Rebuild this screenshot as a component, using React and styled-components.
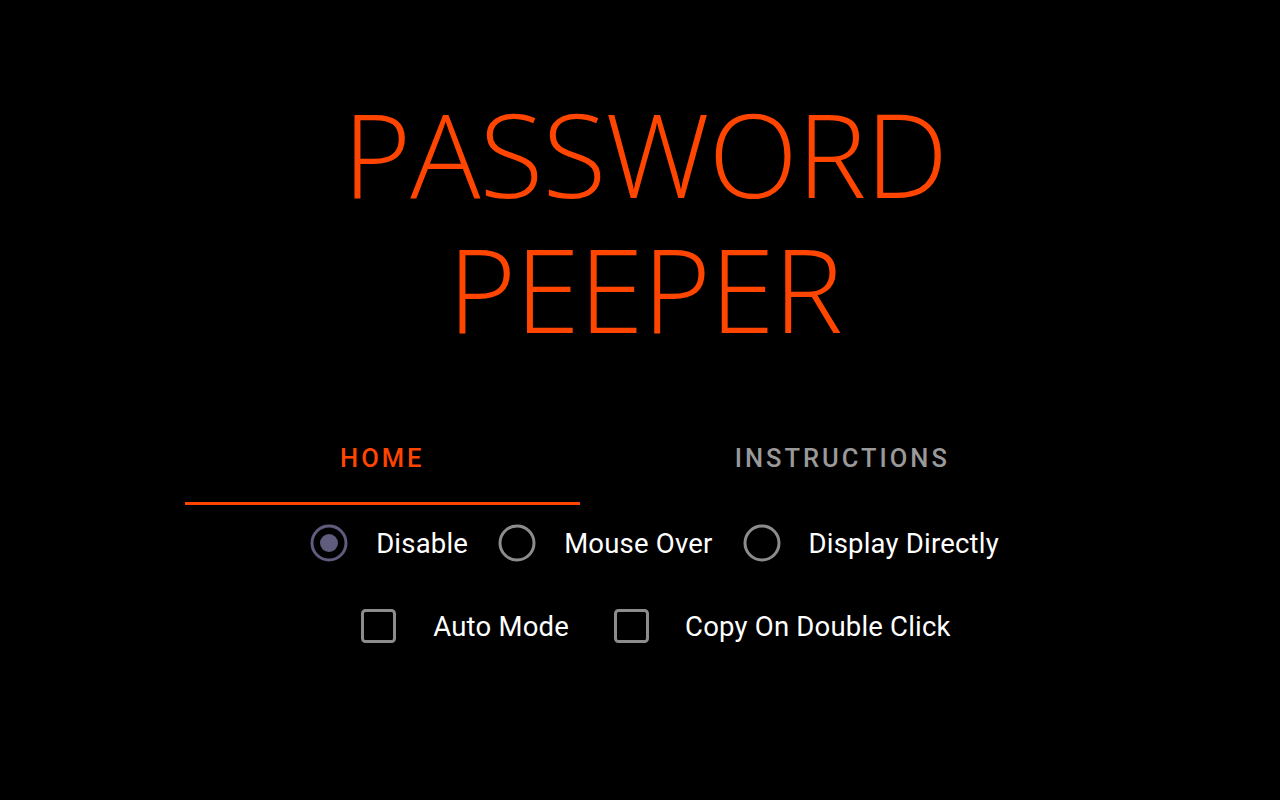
import React, { useState } from 'react';
import styled, { createGlobalStyle } from 'styled-components';

const GlobalStyle = createGlobalStyle`
  html, body {
    margin: 0;
    padding: 0;
    background: #000;
  }
  body {
    font-family: Roboto, "Liberation Sans", sans-serif;
    color: #fff;
  }
`;

const Page = styled.div`
  min-height: 800px;
  padding-left: 10px;
  display: flex;
  flex-direction: column;
  align-items: center;
`;

const Title = styled.h1`
  margin: 85px 0 0;
  font-family: "Open Sans", "Liberation Sans", sans-serif;
  font-weight: 300;
  font-size: 117px;
  line-height: 135px;
  letter-spacing: -1px;
  color: #ff4500;
  text-align: center;
`;

const TitleLine = styled.span`
  display: block;
`;

const TabBar = styled.div`
  margin-top: 76px;
  width: 920px;
  display: flex;
`;

const Tab = styled.button`
  flex: 1 1 auto;
  height: 74px;
  padding: 0 16px 18px;
  border: none;
  background: none;
  border-bottom: 3px solid ${(p) => (p.active ? '#ff4500' : 'transparent')};
  box-sizing: border-box;
  display: flex;
  align-items: center;
  justify-content: center;
  font-family: Roboto, "Liberation Sans", sans-serif;
  font-weight: 500;
  font-size: 25.5px;
  letter-spacing: 3px;
  text-transform: uppercase;
  color: ${(p) => (p.active ? '#ff4500' : '#999')};
  cursor: pointer;
`;

const OptionRow = styled.div`
  display: flex;
  align-items: center;
  gap: ${(p) => p.gap}px;
  height: 56px;
  margin-top: ${(p) => p.top}px;
  padding-left: ${(p) => p.shift}px;
`;

const Option = styled.label`
  display: flex;
  align-items: center;
  gap: ${(p) => p.gap}px;
  font-size: 27.5px;
  letter-spacing: 0.2px;
  color: #fff;
  cursor: pointer;
`;

const RadioIcon = ({ checked }) => (
  <svg width="38" height="38" viewBox="0 0 38 38">
    <circle
      cx="19"
      cy="19"
      r="17"
      fill="none"
      stroke={checked ? '#5f5c7e' : '#8c8c8c'}
      strokeWidth="3"
    />
    {checked && <circle cx="19" cy="19" r="9" fill="#5f5c7e" />}
  </svg>
);

const BoxIcon = () => (
  <svg width="35" height="34" viewBox="0 0 35 34">
    <rect x="1.5" y="1.5" width="32" height="31" rx="3" fill="none" stroke="#8c8c8c" strokeWidth="3" />
  </svg>
);

export default function App() {
  const [tab, setTab] = useState(0);
  const [mode, setMode] = useState('disable');

  const modes = [
    { id: 'disable', label: 'Disable' },
    { id: 'mouse', label: 'Mouse Over' },
    { id: 'direct', label: 'Display Directly' },
  ];

  return (
    <Page>
      <GlobalStyle />
      <Title>
        <TitleLine>PASSWORD</TitleLine>
        <TitleLine>PEEPER</TitleLine>
      </Title>
      <TabBar>
        <Tab active={tab === 0} onClick={() => setTab(0)}>Home</Tab>
        <Tab active={tab === 1} onClick={() => setTab(1)}>Instructions</Tab>
      </TabBar>
      <OptionRow gap={30} top={10} shift={19}>
        {modes.map((m) => (
          <Option key={m.id} gap={28} onClick={() => setMode(m.id)}>
            <RadioIcon checked={mode === m.id} />
            {m.label}
          </Option>
        ))}
      </OptionRow>
      <OptionRow gap={45} top={27} shift={22}>
        <Option gap={37}>
          <BoxIcon />
          Auto Mode
        </Option>
        <Option gap={36}>
          <BoxIcon />
          Copy On Double Click
        </Option>
      </OptionRow>
    </Page>
  );
}
